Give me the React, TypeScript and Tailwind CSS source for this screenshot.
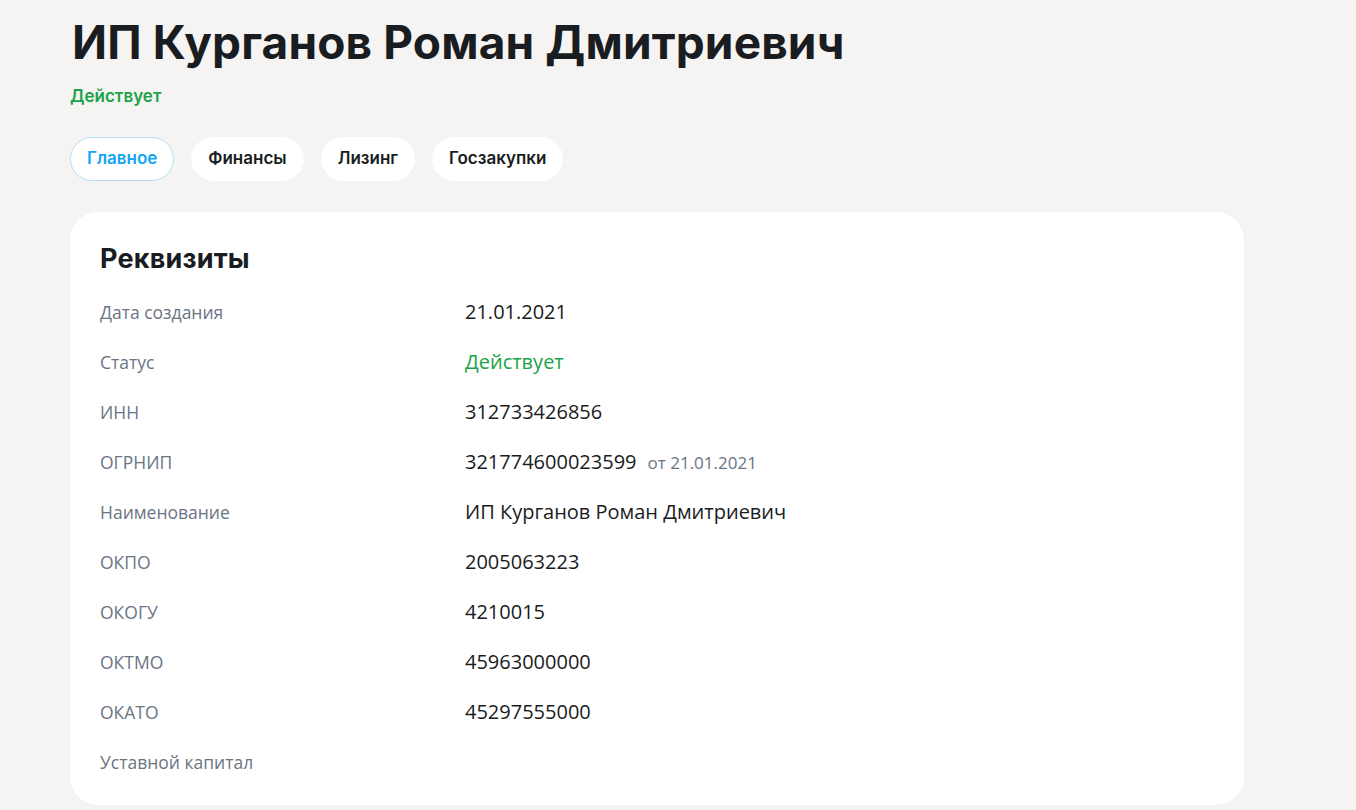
import React from 'react';

const rows: { label: string; value?: string; extra?: string; green?: boolean }[] = [
  { label: 'Дата создания', value: '21.01.2021' },
  { label: 'Статус', value: 'Действует', green: true },
  { label: 'ИНН', value: '312733426856' },
  { label: 'ОГРНИП', value: '321774600023599', extra: 'от 21.01.2021' },
  { label: 'Наименование', value: 'ИП Курганов Роман Дмитриевич' },
  { label: 'ОКПО', value: '2005063223' },
  { label: 'ОКОГУ', value: '4210015' },
  { label: 'ОКТМО', value: '45963000000' },
  { label: 'ОКАТО', value: '45297555000' },
  { label: 'Уставной капитал' },
];

const tabs = ['Главное', 'Финансы', 'Лизинг', 'Госзакупки'];

const head = "font-['Inter',sans-serif]";
const body = "font-['Open_Sans',sans-serif]";

export default function App() {
  return (
    <div className="min-h-[810px] bg-[#f5f4f2] pl-[70px] pr-[112px] pt-[14px]">
      <h1 className={`${head} pl-[2px] text-[46px] font-bold leading-[56px] tracking-[0.15px] text-[#191c21]`}>
        ИП Курганов Роман Дмитриевич
      </h1>
      <div className={`${head} mt-[15px] text-[17px] font-semibold leading-[22px] text-[#1aa34a]`}>Действует</div>

      <div className="mt-[30px] flex gap-[17px]">
        {tabs.map((t, i) => (
          <div
            key={t}
            className={`${head} flex h-[44px] items-center rounded-full px-[16px] text-[17px] font-semibold ${
              i === 0 ? 'border border-[#b3e1fb] bg-white text-[#12a5f4]' : 'border border-white bg-white text-[#191c21]'
            }`}
          >
            {t}
          </div>
        ))}
      </div>

      <div className="mt-[31px] rounded-[28px] bg-white px-[30px] pb-[18px] pt-[29px]">
        <h2 className={`${head} text-[27px] font-bold leading-[36px] tracking-[0.2px] text-[#191c21]`}>Реквизиты</h2>
        <div className="mt-[10px]">
          {rows.map((r) => (
            <div key={r.label} className="flex h-[50px] items-center">
              <div className={`${body} w-[365px] text-[17.5px] text-[#6a7483]`}>{r.label}</div>
              <div className={`${body} flex items-baseline gap-[11px] text-[20px] ${r.green ? 'text-[#1aa34a]' : 'text-[#191c21]'}`}>
                {r.value}
                {r.extra && <span className="text-[17px] text-[#6a7483]">{r.extra}</span>}
              </div>
            </div>
          ))}
        </div>
      </div>
    </div>
  );
}
